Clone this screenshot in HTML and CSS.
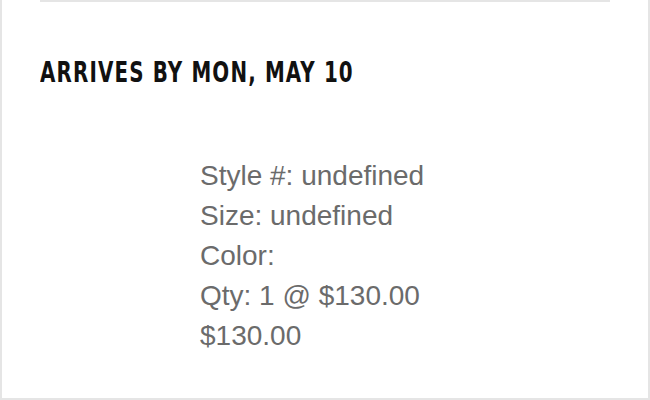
FILE: index.html
```html
<!DOCTYPE html>
<html>
<head>
<meta charset="utf-8">
<link rel="stylesheet" href="styles.css">
</head>
<body>
<div class="panel">
  <div class="inner">
    <div class="divider"></div>
    <h2 class="arrives">ARRIVES BY MON, MAY 10</h2>
    <div class="item">
      <div class="thumb"></div>
      <div class="details">
        <div>Style #: undefined</div>
        <div>Size: undefined</div>
        <div>Color: </div>
        <div>Qty: 1 @ $130.00</div>
        <div>$130.00</div>
      </div>
    </div>
  </div>
</div>
</body>
</html>
```
FILE: styles.css
```css
html, body { margin: 0; padding: 0; background: #fff; }
.panel {
  width: 650px;
  height: 400px;
  box-sizing: border-box;
  border: 2px solid #e5e5e5;
  border-top: none;
}
.inner { padding: 0 38px; }
.divider { height: 2px; background: #e5e5e5; }
.arrives {
  margin: 0;
  padding-top: 53px;
  font-family: "DejaVu Sans Condensed", "DejaVu Sans", sans-serif;
  font-weight: bold;
  font-size: 29px;
  line-height: 34px;
  letter-spacing: 1.5px;
  color: #111;
  transform: scaleX(0.762);
  transform-origin: left center;
  white-space: nowrap;
}
.item { display: flex; padding-top: 67px; }
.thumb { width: 160px; flex: none; }
.details {
  font-family: "Liberation Sans", Arial, sans-serif;
  font-size: 28px;
  line-height: 40px;
  color: #6b6b6b;
}
```
